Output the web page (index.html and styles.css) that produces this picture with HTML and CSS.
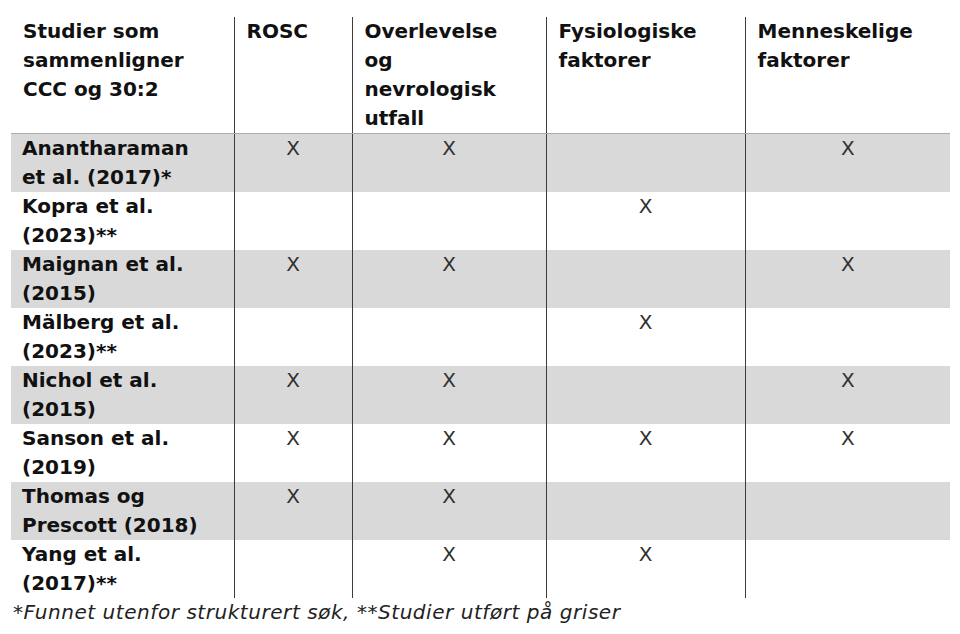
FILE: index.html
```html
<!DOCTYPE html>
<html lang="no">
<head>
<meta charset="utf-8">
<title>Studier</title>
<link rel="stylesheet" href="styles.css">
</head>
<body>
<div class="page">
<table class="grid">
  <colgroup>
    <col class="c1"><col class="c2"><col class="c3"><col class="c4"><col class="c5">
  </colgroup>
  <thead>
    <tr>
      <th>Studier som sammenligner CCC og 30:2</th>
      <th>ROSC</th>
      <th>Overlevelse og nevrologisk utfall</th>
      <th>Fysiologiske faktorer</th>
      <th>Menneskelige faktorer</th>
    </tr>
  </thead>
  <tbody>
    <tr class="shade"><th>Anantharaman et al. (2017)*</th><td>X</td><td>X</td><td></td><td>X</td></tr>
    <tr><th>Kopra et al. (2023)**</th><td></td><td></td><td>X</td><td></td></tr>
    <tr class="shade"><th>Maignan et al. (2015)</th><td>X</td><td>X</td><td></td><td>X</td></tr>
    <tr><th>Mälberg et al. (2023)**</th><td></td><td></td><td>X</td><td></td></tr>
    <tr class="shade"><th>Nichol et al. (2015)</th><td>X</td><td>X</td><td></td><td>X</td></tr>
    <tr><th>Sanson et al. (2019)</th><td>X</td><td>X</td><td>X</td><td>X</td></tr>
    <tr class="shade"><th>Thomas og Prescott (2018)</th><td>X</td><td>X</td><td></td><td></td></tr>
    <tr><th>Yang et al. (2017)**</th><td></td><td>X</td><td>X</td><td></td></tr>
  </tbody>
</table>
<p class="note">*Funnet utenfor strukturert søk, **Studier utført på griser</p>
</div>
</body>
</html>
```

FILE: styles.css
```css
html, body {
  margin: 0;
  padding: 0;
  background: #ffffff;
}

.page {
  padding: 17px 0 0 11px;
  font-family: "DejaVu Sans", Verdana, sans-serif;
  color: #111111;
}

.grid {
  border-collapse: collapse;
  table-layout: fixed;
  width: 939px;
  font-size: 20px;
  line-height: 29px;
}

.c1 { width: 223px; }
.c2 { width: 118px; }
.c3 { width: 194px; }
.c4 { width: 199px; }
.c5 { width: 205px; }

.grid th,
.grid td {
  padding: 0 22px 0 12px;
  vertical-align: top;
  text-align: left;
}

.grid th {
  font-weight: bold;
}

.grid thead th {
  border-bottom: 1px solid #ababab;
}

.grid td {
  font-weight: normal;
  text-align: center;
  color: #303030;
  padding: 0;
}

.grid th + th,
.grid th + td,
.grid td + td {
  border-left: 1px solid #3c3c3c;
}

.grid tbody th {
  padding-left: 11px;
}

.shade {
  background: #d9d9d9;
}

.note {
  margin: 0;
  padding-left: 2px;
  font-size: 20px;
  line-height: 29px;
  letter-spacing: 0.55px;
  font-style: italic;
  color: #222222;
}
```
